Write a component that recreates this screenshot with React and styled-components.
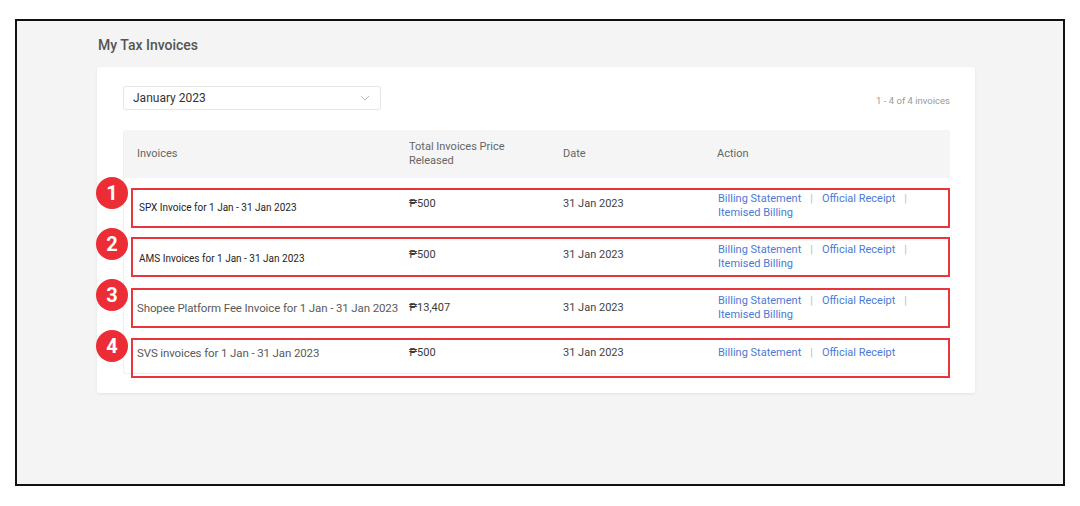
import React from "react";
import styled, { createGlobalStyle } from "styled-components";

const GlobalStyle = createGlobalStyle`
  html, body {
    margin: 0;
    padding: 0;
    background: #ffffff;
    font-family: Roboto, "Noto Sans", Arial, sans-serif;
  }
`;

const Page = styled.div`
  width: 1080px;
  height: 506px;
  padding: 19px 15px 0 15px;
  box-sizing: border-box;
`;

const Frame = styled.div`
  height: 467px;
  border: 2px solid #111;
  background: #f4f4f4;
  box-sizing: border-box;
  padding: 15px 0 0 80px;
`;

const Title = styled.h1`
  margin: 0 0 13px 1px;
  font-size: 14px;
  line-height: 18px;
  font-weight: 500;
  color: #555;
`;

const Card = styled.div`
  width: 878px;
  background: #fff;
  box-shadow: 0 1px 3px rgba(0, 0, 0, 0.07);
  border-radius: 2px;
  padding: 19px 25px 19px 26px;
  box-sizing: border-box;
`;

const Toolbar = styled.div`
  display: flex;
  justify-content: space-between;
  align-items: flex-end;
`;

const Select = styled.div`
  width: 258px;
  height: 24px;
  box-sizing: border-box;
  border: 1px solid #e6e6e6;
  border-radius: 3px;
  display: flex;
  align-items: center;
  justify-content: space-between;
  padding: 0 10px 0 9px;
  font-size: 12px;
  color: #333;
`;

const Count = styled.span`
  font-size: 9.5px;
  color: #9a9a9a;
  padding-bottom: 4px;
`;

const Table = styled.div`
  margin-top: 20px;
  border-left: 1px solid #eeeeee;
  border-bottom: 1px solid #eeeeee;
  border-radius: 3px;
`;

const Grid = styled.div`
  display: grid;
  grid-template-columns: 272px 154px 154px 1fr;
  padding-left: 13px;
`;

const Head = styled(Grid)`
  height: 48px;
  align-items: center;
  background: #f5f5f5;
  border-radius: 3px 3px 0 0;
  font-size: 11px;
  line-height: 14px;
  color: #666;
`;

const HeadCell = styled.div`
  max-width: 112px;
`;

const Body = styled.div`
  padding-top: 2px;
`;

const Row = styled(Grid)`
  position: relative;
  align-items: center;
  min-height: ${(p) => (p.$short ? "39.5px" : "51px")};
  box-sizing: border-box;
`;

const Name = styled.div`
  white-space: nowrap;
  font-size: ${(p) => (p.$edited ? "10px" : "11.5px")};
  letter-spacing: ${(p) => (p.$edited ? "0" : "-0.12px")};
  color: ${(p) => (p.$edited ? "#1e1e1e" : "#5a5a5a")};
  padding-left: ${(p) => (p.$edited ? "2px" : "0")};
  padding-top: ${(p) => (p.$edited ? "4px" : "0")};
`;

const Price = styled.div`
  font-size: 11px;
  color: #3a3a3a;
  padding-bottom: ${(p) => (p.$edited ? "4px" : "0")};
`;

const DateCell = styled.div`
  font-size: 11px;
  color: #444;
  padding-bottom: ${(p) => (p.$edited ? "4px" : "0")};
`;

const Actions = styled.div`
  display: flex;
  flex-wrap: wrap;
  align-items: center;
  padding-left: 1px;
  padding-right: 20px;
  font-size: 11px;
  line-height: 13.5px;
`;

const Link = styled.a`
  color: #4b7ad6;
  text-decoration: none;
  white-space: nowrap;
`;

const Sep = styled.span`
  color: #bdbdbd;
  margin: 0 9px;
`;

const Marker = styled.div`
  position: absolute;
  left: 7px;
  right: 0;
  top: ${(p) => p.$top}px;
  height: 40px;
  border: 2px solid #e8363c;
  box-sizing: border-box;
  pointer-events: none;
`;

const Badge = styled.div`
  position: absolute;
  left: -28px;
  top: -3px;
  width: 32px;
  height: 32px;
  border-radius: 50%;
  background: #ec2d36;
  color: #fff;
  font-weight: 700;
  font-size: 20px;
  display: flex;
  align-items: center;
  justify-content: center;
  z-index: 2;
`;

const Chevron = () => (
  <svg width="10" height="6" viewBox="0 0 10 6">
    <polyline points="1,1 5,5 9,1" fill="none" stroke="#bbb" strokeWidth="1" />
  </svg>
);

const rows = [
  { name: "SPX Invoice for 1 Jan - 31 Jan 2023", price: "₱500", itemised: true, edited: true, top: 8 },
  { name: "AMS Invoices for 1 Jan - 31 Jan 2023", price: "₱500", itemised: true, edited: true, top: 6 },
  { name: "Shopee Platform Fee Invoice for 1 Jan - 31 Jan 2023", price: "₱13,407", itemised: true, top: 6 },
  { name: "SVS invoices for 1 Jan - 31 Jan 2023", price: "₱500", itemised: false, top: 5 },
];

const App = () => {
  return (
    <Page>
      <GlobalStyle />
      <Frame>
        <Title>My Tax Invoices</Title>
        <Card>
          <Toolbar>
            <Select>
              January 2023
              <Chevron />
            </Select>
            <Count>1 - 4 of 4 invoices</Count>
          </Toolbar>
          <Table>
            <Head>
              <HeadCell>Invoices</HeadCell>
              <HeadCell>Total Invoices Price Released</HeadCell>
              <HeadCell>Date</HeadCell>
              <HeadCell>Action</HeadCell>
            </Head>
            <Body>
              {rows.map((r, i) => (
                <Row key={i} $short={!r.itemised}>
                  <Badge>{i + 1}</Badge>
                  <Marker $top={r.top} />
                  <Name $edited={r.edited}>{r.name}</Name>
                  <Price $edited={r.edited}>{r.price}</Price>
                  <DateCell $edited={r.edited}>31 Jan 2023</DateCell>
                  <Actions>
                    <Link>Billing Statement</Link>
                    <Sep>|</Sep>
                    <Link>Official Receipt</Link>
                    {r.itemised && (
                      <>
                        <Sep>|</Sep>
                        <Link>Itemised Billing</Link>
                      </>
                    )}
                  </Actions>
                </Row>
              ))}
            </Body>
          </Table>
        </Card>
      </Frame>
    </Page>
  );
};

export default App;
